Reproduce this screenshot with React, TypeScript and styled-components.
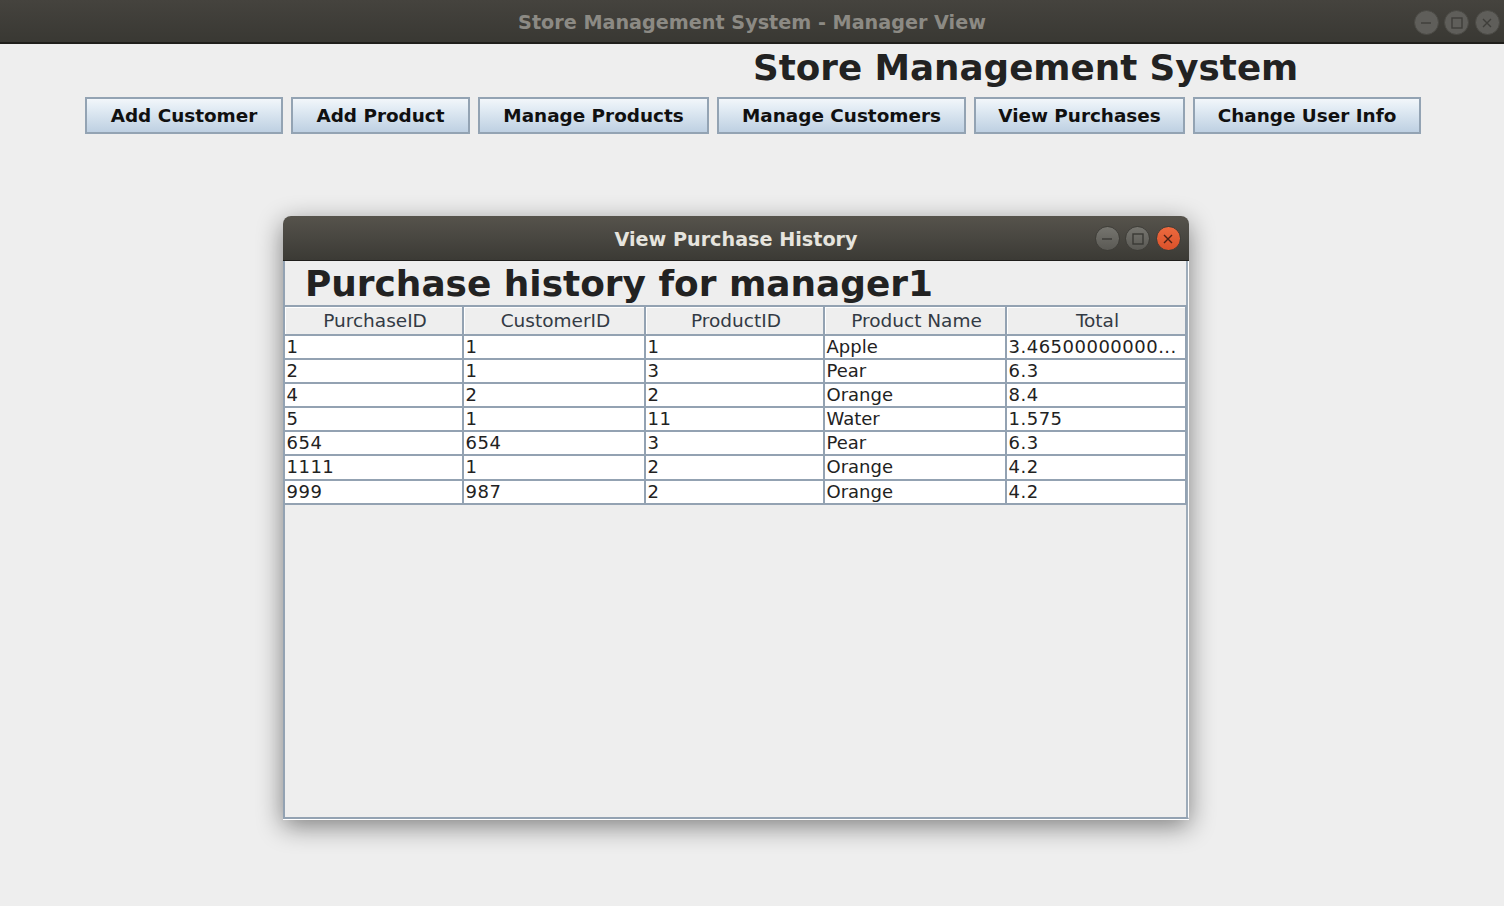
import React from 'react';
import styled, { createGlobalStyle } from 'styled-components';

const GlobalStyle = createGlobalStyle`
  html, body { margin: 0; padding: 0; height: 100%; background: #eeeeee; overflow: hidden; }
  body { font-family: "DejaVu Sans", sans-serif; }
`;

const Frame = styled.div`
  width: 1504px;
  height: 906px;
  display: flex;
  flex-direction: column;
`;

const TitleBar = styled.div<{ $height: number; $active?: boolean }>`
  height: ${p => p.$height}px;
  flex: none;
  box-sizing: border-box;
  position: relative;
  display: flex;
  align-items: center;
  justify-content: center;
  padding-top: 2px;
  background: linear-gradient(#56534c, #3b3a35);
  border-bottom: 1px solid #1f1e1b;
  font-weight: bold;
  font-size: 19.2px;
  color: ${p => (p.$active ? '#e6e4de' : '#8c8a84')};
`;

const MainBar = styled(TitleBar)`
  border-bottom-width: 2px;
  background: linear-gradient(#45433e, #393833);
`;

const WindowButtons = styled.div<{ $right: number }>`
  position: absolute;
  right: ${p => p.$right}px;
  top: 10px;
  display: flex;
  gap: 5.5px;
`;

const RoundButton = styled.div<{ $close?: boolean; $dim?: boolean }>`
  width: 25px;
  height: 25px;
  border-radius: 50%;
  display: flex;
  align-items: center;
  justify-content: center;
  box-sizing: border-box;
  border: 1px solid ${p => (p.$dim ? '#4a4944' : '#3e3d38')};
  background: ${p => (p.$close ? 'linear-gradient(#ee6a3f, #d9512a)' : p.$dim ? '#5f5e5a' : 'linear-gradient(#76756f, #5a5954)')};
  svg { display: block; }
`;

const HeadingRow = styled.div`
  padding: 3px 0 0 753px;
  height: 53px;
  box-sizing: border-box;
`;

const MainHeading = styled.h1`
  margin: 0;
  font-size: 35.7px;
  line-height: 42px;
  font-weight: bold;
  color: #222222;
  white-space: nowrap;
`;

const Toolbar = styled.div`
  display: flex;
  justify-content: flex-start;
  gap: 8px;
  padding-left: 85px;
  height: 37px;
`;

const ToolButton = styled.button<{ $width: number }>`
  width: ${p => p.$width}px;
  height: 37px;
  padding: 0;
  box-sizing: border-box;
  border: 2px solid #93a3b3;
  border-radius: 0;
  background: linear-gradient(#f2f6fa 0%, #e4edf5 25%, #bed0e2 100%);
  font-family: "DejaVu Sans", sans-serif;
  font-weight: bold;
  font-size: 18.4px;
  color: #101010;
`;

const InternalWindow = styled.section`
  width: 906px;
  height: 603px;
  margin: 82px 0 0 283px;
  display: flex;
  flex-direction: column;
  border-radius: 8px 8px 0 0;
  background: #eeeeee;
  box-shadow: 0 1px 0 #ffffff, 0 7px 26px rgba(0, 0, 0, 0.48);
`;

const InternalBar = styled(TitleBar)`
  border-radius: 8px 8px 0 0;
`;

const WindowBody = styled.div`
  flex: 1;
  display: flex;
  flex-direction: column;
  box-sizing: border-box;
  border-left: 2px solid #93a2b2;
  border-bottom: 2px solid #93a2b2;
  border-right: 1px solid #ffffff;
  box-shadow: inset -2px 0 0 #9dabb9;
`;

const HistoryHeading = styled.h2`
  margin: 0;
  height: 44px;
  padding-left: 20px;
  font-size: 35.9px;
  line-height: 45px;
  font-weight: bold;
  color: #222222;
  white-space: nowrap;
  box-sizing: border-box;
`;

const Table = styled.div`
  width: 902px;
  border-top: 2px solid #93a2b2;
  box-sizing: border-box;
`;

const COLUMNS = '179px 182px 179px 182px 180px';

const HeaderRow = styled.div`
  display: grid;
  grid-template-columns: ${COLUMNS};
  height: 27px;
  border-bottom: 2px solid #93a2b2;
`;

const HeaderCell = styled.div`
  padding-left: 3px;
  text-align: center;
  font-size: 18.5px;
  line-height: 27px;
  color: #333a44;
  border-right: 2px solid #93a2b2;
  box-shadow: inset 1px 1px 0 #ffffff;
`;

const Row = styled.div`
  display: grid;
  grid-template-columns: ${COLUMNS};
  height: 22.1px;
  background: #ffffff;
  border-bottom: 2px solid #93a2b2;
`;

const Cell = styled.div<{ $numeric?: boolean }>`
  padding-left: 1.5px;
  font-size: 18px;
  line-height: 22px;
  letter-spacing: ${p => (p.$numeric ? '0.5px' : '0')};
  color: #222222;
  border-right: 2px solid #93a2b2;
  white-space: nowrap;
  overflow: hidden;
`;

const Glyph = ({ kind, color }: { kind: 'min' | 'max' | 'close'; color: string }) => (
  <svg width="14" height="14" viewBox="0 0 14 14" fill="none" stroke={color} strokeWidth="1.4">
    {kind === 'min' && <path d="M2 7h10" />}
    {kind === 'max' && <rect x="2" y="2" width="10" height="10" />}
    {kind === 'close' && <path d="M3 3l8 8M11 3l-8 8" />}
  </svg>
);

const buttons = [
  { label: 'Add Customer', width: 198 },
  { label: 'Add Product', width: 179 },
  { label: 'Manage Products', width: 231 },
  { label: 'Manage Customers', width: 249 },
  { label: 'View Purchases', width: 211 },
  { label: 'Change User Info', width: 228 },
];

const headers = ['PurchaseID', 'CustomerID', 'ProductID', 'Product Name', 'Total'];

const rows = [
  ['1', '1', '1', 'Apple', '3.46500000000...'],
  ['2', '1', '3', 'Pear', '6.3'],
  ['4', '2', '2', 'Orange', '8.4'],
  ['5', '1', '11', 'Water', '1.575'],
  ['654', '654', '3', 'Pear', '6.3'],
  ['1111', '1', '2', 'Orange', '4.2'],
  ['999', '987', '2', 'Orange', '4.2'],
];

export default function App() {
  return (
    <Frame>
      <GlobalStyle />
      <MainBar $height={44}>
        Store Management System - Manager View
        <WindowButtons $right={4.5}>
          <RoundButton $dim><Glyph kind="min" color="#3f3e3a" /></RoundButton>
          <RoundButton $dim><Glyph kind="max" color="#3f3e3a" /></RoundButton>
          <RoundButton $dim><Glyph kind="close" color="#3f3e3a" /></RoundButton>
        </WindowButtons>
      </MainBar>
      <HeadingRow>
        <MainHeading>Store Management System</MainHeading>
      </HeadingRow>
      <Toolbar>
        {buttons.map(b => (
          <ToolButton key={b.label} $width={b.width}>{b.label}</ToolButton>
        ))}
      </Toolbar>
      <InternalWindow>
        <InternalBar $height={45} $active>
          View Purchase History
          <WindowButtons $right={8.5}>
            <RoundButton><Glyph kind="min" color="#3a3935" /></RoundButton>
            <RoundButton><Glyph kind="max" color="#3a3935" /></RoundButton>
            <RoundButton $close><Glyph kind="close" color="#4a2015" /></RoundButton>
          </WindowButtons>
        </InternalBar>
        <WindowBody>
          <HistoryHeading>Purchase history for manager1</HistoryHeading>
          <Table>
            <HeaderRow>
              {headers.map(h => <HeaderCell key={h}>{h}</HeaderCell>)}
            </HeaderRow>
            {rows.map(r => (
              <Row key={r[0]}>
                {r.map((c, i) => <Cell key={i} $numeric={i !== 3}>{c}</Cell>)}
              </Row>
            ))}
          </Table>
        </WindowBody>
      </InternalWindow>
    </Frame>
  );
}
